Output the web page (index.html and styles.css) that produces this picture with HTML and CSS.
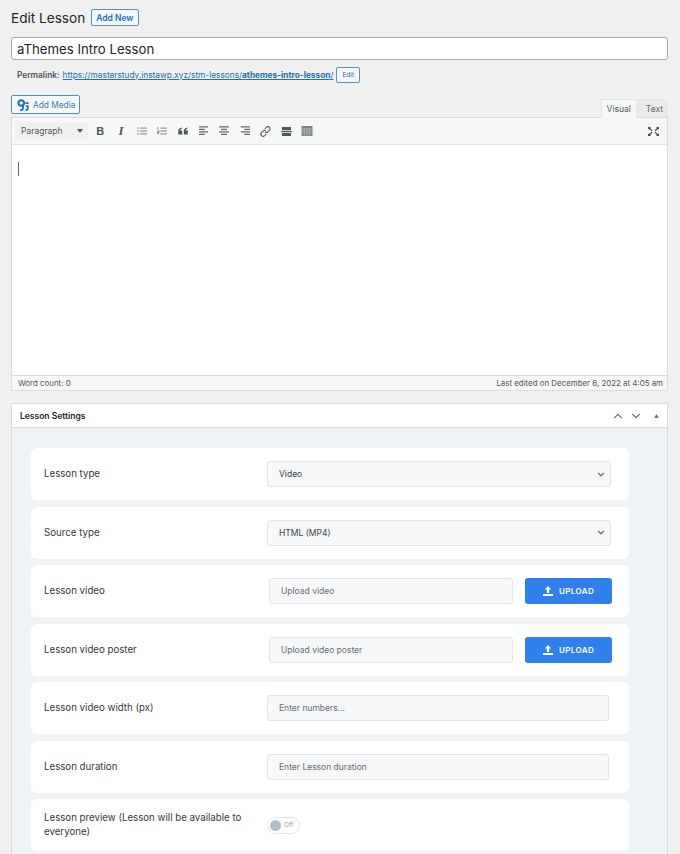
FILE: index.html
```html
<!DOCTYPE html>
<html lang="en">
<head>
  <meta charset="UTF-8">
  <meta name="viewport" content="width=device-width, initial-scale=1.0">
  <title>Edit Lesson</title>
  <link rel="stylesheet" href="styles.css">
</head>
<body>
  <!-- Heading -->
  <div class="page-head">
    <h1>Edit Lesson</h1>
    <a class="btn-outline add-new">Add New</a>
  </div>

  <input class="title-input" type="text" value="aThemes Intro Lesson">

  <div class="permalink">
    <strong>Permalink:</strong>
    <a class="perma-link">https://masterstudy.instawp.xyz/stm-lessons/<b>athemes-intro-lesson</b>/</a>
    <a class="btn-outline edit-slug">Edit</a>
  </div>

  <!-- Editor -->
  <div class="editor-tools">
    <a class="btn-outline add-media">
      <svg width="12" height="12" viewBox="0 0 13 13"><circle cx="4.6" cy="4.4" r="3" fill="none" stroke="#2271b1" stroke-width="2.2"/><path d="M6.5 6.5v3.2c0 1.8-1.5 2.8-3.2 2.6" fill="none" stroke="#2271b1" stroke-width="2"/><path d="M9 3.5h3.6v1.8H9zM9.6 6.8h3v4.4c0 1-.9 1.6-2 1.6H9v-1.7h1.6V8.5h-1z" fill="#2271b1"/></svg>
      Add Media
    </a>
    <div class="tabs">
      <span class="tab tab-active">Visual</span>
      <span class="tab tab-text">Text</span>
    </div>
  </div>

  <div class="editor">
    <div class="toolbar">
      <div class="format-select">Paragraph<span class="caret"></span></div>
      <span class="tool tool-b">B</span>
      <span class="tool tool-i">I</span>
      <span class="tool"><svg width="10" height="10" viewBox="0 0 12 12" stroke="#646970" fill="none"><path d="M4 2.5h8M4 6h8M4 9.5h8M.5 2.5h2M.5 6h2M.5 9.5h2"/></svg></span>
      <span class="tool"><svg width="10" height="10" viewBox="0 0 12 12" stroke="#646970" fill="none"><path d="M4 2.5h8M4 6h8M4 9.5h8M1 1.5v2.5M.5 6h2v1.4h-2v1.6h2"/></svg></span>
      <span class="tool"><svg width="10" height="8" viewBox="0 0 12 10" fill="#50575e"><path d="M0 5.5C0 2.6 1.6 1 4.5.5v1.8C3.3 2.7 2.6 3.4 2.5 4.4H5V9.5H0zM7 5.5C7 2.6 8.6 1 11.5.5v1.8c-1.2.4-1.9 1.1-2 2.1H12V9.5H7z"/></svg></span>
      <span class="tool"><svg width="10" height="10" viewBox="0 0 12 12" stroke="#646970" stroke-width="1.3" fill="none"><path d="M0 1h11M0 4h7M0 7h11M0 10h7"/></svg></span>
      <span class="tool"><svg width="10" height="10" viewBox="0 0 12 12" stroke="#646970" stroke-width="1.3" fill="none"><path d="M0 1h12M2.5 4h7M0 7h12M2.5 10h7"/></svg></span>
      <span class="tool"><svg width="10" height="10" viewBox="0 0 12 12" stroke="#646970" stroke-width="1.3" fill="none"><path d="M1 1h11M5 4h7M1 7h11M5 10h7"/></svg></span>
      <span class="tool"><svg width="11" height="11" viewBox="0 0 13 13" stroke="#646970" stroke-width="1.5" fill="none"><path d="M5.6 3.4 7.5 1.6a2.3 2.3 0 0 1 3.6 3.6L9.2 7.1a2.3 2.3 0 0 1-3.2 0M7.4 9.6l-1.9 1.8a2.3 2.3 0 0 1-3.6-3.6l1.9-1.9a2.3 2.3 0 0 1 3.2 0"/></svg></span>
      <span class="tool"><svg width="11" height="9" viewBox="0 0 12 10" fill="#50575e"><path d="M1 0h10v3.6H1zM1 6.4h10V10H1zM0 4.5h12v1H0z"/></svg></span>
      <span class="tool"><svg width="12" height="10" viewBox="0 0 12 11"><rect width="12" height="11" fill="#7d8388"/><path d="M0 3.2h12M0 5.6h12M0 8h12M3 2v9M6 2v9M9 2v9" stroke="#c9cccf" stroke-width=".6"/></svg></span>
      <span class="tool tool-full"><svg width="11" height="9" viewBox="0 0 12 10" fill="#3c434a"><path d="M0 0h2.6v2.6H0zM9.4 0H12v2.6H9.4zM0 7.4h2.6V10H0zM9.4 7.4H12V10H9.4z"/><path d="m2.4 1.6 2.4 2-.8 1-2.4-2zM9.6 1.6l-2.4 2 .8 1 2.4-2zM2.4 8.4l2.4-2-.8-1-2.4 2zM9.6 8.4l-2.4-2 .8-1 2.4 2z"/></svg></span>
    </div>
    <div class="editor-body"><span class="cursor"></span></div>
    <div class="status-bar">
      <span>Word count: 0</span>
      <span>Last edited on December 6, 2022 at 4:05 am</span>
    </div>
  </div>

  <!-- Lesson Settings -->
  <div class="panel">
    <div class="panel-head">
      <h2>Lesson Settings</h2>
      <div class="panel-actions">
        <svg width="10" height="6" viewBox="0 0 11 7" fill="none" stroke="#646970" stroke-width="1.3"><path d="m1 6 4.5-4.5L10 6"/></svg>
        <svg width="10" height="6" viewBox="0 0 11 7" fill="none" stroke="#646970" stroke-width="1.3"><path d="m1 1 4.5 4.5L10 1"/></svg>
        <svg class="collapse" width="5" height="4" viewBox="0 0 6 4" fill="#646970"><path d="M3 0l3 4H0z"/></svg>
      </div>
    </div>
    <div class="panel-body">
      <div class="field">
        <label>Lesson type</label>
        <div class="control select">Video<svg class="chev" width="8" height="5" viewBox="0 0 9 6" fill="none" stroke="#646970" stroke-width="1.5"><path d="m1 1 3.5 3.5L8 1"/></svg></div>
      </div>
      <div class="field">
        <label>Source type</label>
        <div class="control select">HTML (MP4)<svg class="chev" width="8" height="5" viewBox="0 0 9 6" fill="none" stroke="#646970" stroke-width="1.5"><path d="m1 1 3.5 3.5L8 1"/></svg></div>
      </div>
      <div class="field">
        <label>Lesson video</label>
        <div class="upload-wrap">
          <div class="control ghost">Upload video</div>
          <a class="btn-upload"><svg width="10" height="10" viewBox="0 0 10 10" fill="#fff"><path d="M5 0 8.2 3.4H6.2V7H3.8V3.4H1.8zM0 8h10v2H0z"/></svg>UPLOAD</a>
        </div>
      </div>
      <div class="field">
        <label>Lesson video poster</label>
        <div class="upload-wrap">
          <div class="control ghost">Upload video poster</div>
          <a class="btn-upload"><svg width="10" height="10" viewBox="0 0 10 10" fill="#fff"><path d="M5 0 8.2 3.4H6.2V7H3.8V3.4H1.8zM0 8h10v2H0z"/></svg>UPLOAD</a>
        </div>
      </div>
      <div class="field">
        <label>Lesson video width (px)</label>
        <div class="control ghost narrow">Enter numbers...</div>
      </div>
      <div class="field">
        <label>Lesson duration</label>
        <div class="control ghost narrow">Enter Lesson duration</div>
      </div>
      <div class="field">
        <label>Lesson preview (Lesson will be available to everyone)</label>
        <div class="toggle"><span class="knob"></span><span class="toggle-text">Off</span></div>
      </div>
    </div>
  </div>
</body>
</html>
```

FILE: styles.css
```css
html {
  height: 854px;
  overflow: hidden;
}
body {
  margin: 0;
  padding: 0 12px 0 11px;
  background-color: #f0f0f1;
  color: #1d2327;
  font-family: Inter, "Liberation Sans", Arial, sans-serif;
  font-size: 9px;
}
a {
  text-decoration: none;
}

/* Heading */
.page-head {
  display: flex;
  align-items: center;
  gap: 6px;
  height: 37px;
  padding-bottom: 2px;
  box-sizing: border-box;
}
h1 {
  margin: 0;
  font-size: 13.6px;
  font-weight: 400;
  color: #1d2327;
}
.btn-outline {
  display: inline-flex;
  align-items: center;
  box-sizing: border-box;
  border: 1px solid #4f94c4;
  border-radius: 2px;
  background-color: #f6f7f7;
  color: #2271b1;
}
.add-new {
  height: 17px;
  padding: 0 4px;
  font-size: 8.5px;
  font-weight: 600;
}

.title-input {
  display: block;
  box-sizing: border-box;
  width: 100%;
  height: 23px;
  padding: 0 5px;
  border: 1px solid #a7aaad;
  border-radius: 3px;
  background-color: #fff;
  color: #1d2327;
  font-family: inherit;
  font-size: 13.2px;
}

.permalink {
  display: flex;
  align-items: center;
  gap: 3px;
  height: 17px;
  margin-top: 6px;
  padding-left: 6px;
  color: #50575e;
  font-size: 8.3px;
}
.permalink strong {
  font-weight: 600;
}
.perma-link {
  color: #2271b1;
  text-decoration: underline;
}
.edit-slug {
  height: 16px;
  margin-left: 0;
  padding: 0 5px;
  font-size: 6.5px;
}

/* Editor */
.editor-tools {
  display: flex;
  align-items: flex-end;
  justify-content: space-between;
  height: 34px;
}
.add-media {
  gap: 4px;
  height: 19px;
  margin-bottom: 3px;
  padding: 0 4px 0 5px;
  color: #3580ba;
  font-size: 8.3px;
}
.tabs {
  display: flex;
  gap: 1px;
  margin-right: 1px;
}
.tab {
  box-sizing: border-box;
  height: 18px;
  padding: 4px 5px 0;
  border: 1px solid #e4e4e5;
  border-bottom: 0;
  background-color: #ebebec;
  color: #646970;
  font-size: 8.5px;
}
.tab-active {
  height: 19px;
  margin-bottom: -1px;
  background-color: #f6f7f7;
  color: #50575e;
}
.tab-text {
  padding: 4px 3px 0 7px;
}
.editor {
  border: 1px solid #dcdcde;
}
.toolbar {
  display: flex;
  align-items: center;
  height: 26px;
  padding-left: 3px;
  border-bottom: 1px solid #e4e4e5;
  background-color: #f6f7f7;
}
.format-select {
  display: flex;
  align-items: center;
  justify-content: space-between;
  box-sizing: border-box;
  width: 73px;
  height: 17px;
  margin-right: 2px;
  padding: 0 5px 0 6px;
  background-color: #f0f0f1;
  color: #50575e;
  font-size: 8.5px;
}
.caret {
  width: 0;
  height: 0;
  border-top: 4px solid #50575e;
  border-left: 3px solid transparent;
  border-right: 3px solid transparent;
}
.tool {
  display: flex;
  align-items: center;
  justify-content: center;
  flex: none;
  width: 20.7px;
  height: 20px;
  color: #50575e;
}
.tool-b {
  font-family: "Liberation Sans", Arial, sans-serif;
  font-size: 11px;
  font-weight: 700;
}
.tool-i {
  font-family: "Liberation Serif", serif;
  font-size: 13px;
  font-style: italic;
  font-weight: 700;
}
.tool-full {
  margin-left: auto;
  margin-right: 3px;
}
.editor-body {
  box-sizing: border-box;
  height: 230px;
  padding: 17px 6px 0;
  background-color: #fff;
}
.cursor {
  display: block;
  width: 1px;
  height: 14px;
  background-color: #646970;
}
.status-bar {
  display: flex;
  align-items: center;
  justify-content: space-between;
  height: 14px;
  padding: 0 4px 0 6px;
  border-top: 1px solid #dcdcde;
  background-color: #f6f7f7;
  color: #50575e;
  font-size: 7.9px;
}

/* Lesson Settings */
.panel {
  margin-top: 12px;
  border: 1px solid #dcdcde;
  border-bottom: 0;
}
.panel-head {
  display: flex;
  align-items: center;
  justify-content: space-between;
  box-sizing: border-box;
  height: 24px;
  padding: 0 8px;
  border-bottom: 1px solid #dcdcde;
  background-color: #fff;
}
h2 {
  margin: 0;
  font-size: 8.5px;
  font-weight: 600;
}
.panel-actions {
  display: flex;
  align-items: center;
  gap: 8px;
}
.collapse {
  margin-left: 5px;
}
.panel-body {
  display: flex;
  flex-direction: column;
  gap: 6.5px;
  padding: 20px 38px 20px 19px;
  background-color: #f0f3f5;
}
.field {
  display: grid;
  grid-template-columns: 223px 1fr;
  align-items: center;
  box-sizing: border-box;
  height: 52px;
  padding: 0 18px 0 13px;
  border-radius: 6px;
  background-color: #fff;
}
.field label {
  color: #33383c;
  font-size: 9.7px;
  line-height: 14px;
}
.control {
  display: flex;
  align-items: center;
  box-sizing: border-box;
  height: 26px;
  padding: 0 11px;
  border: 1px solid #e1e5e8;
  border-radius: 3px;
  background-color: #f5f7f9;
  color: #3b4248;
  font-size: 8.5px;
}
.select {
  justify-content: space-between;
  padding-right: 5px;
}
.ghost {
  color: #666e75;
}
.narrow {
  width: 342px;
}
.upload-wrap {
  display: flex;
  gap: 12px;
  margin-left: 2px;
}
.upload-wrap .control {
  flex: none;
  width: 244px;
}
.btn-upload {
  display: flex;
  align-items: center;
  justify-content: center;
  gap: 6px;
  flex: none;
  width: 87px;
  height: 26px;
  border-radius: 3px;
  background-color: #2f7fed;
  color: #fff;
  font-size: 8px;
  font-weight: 600;
  letter-spacing: .4px;
}
.toggle {
  display: flex;
  align-items: center;
  gap: 3px;
  box-sizing: border-box;
  width: 33px;
  height: 17px;
  padding: 0 2px;
  border: 1px solid #e1e5e8;
  border-radius: 9px;
  background-color: #fff;
}
.knob {
  width: 11px;
  height: 11px;
  border-radius: 50%;
  background-color: #b4bcc4;
}
.toggle-text {
  color: #9aa1a7;
  font-size: 6.5px;
}
```
